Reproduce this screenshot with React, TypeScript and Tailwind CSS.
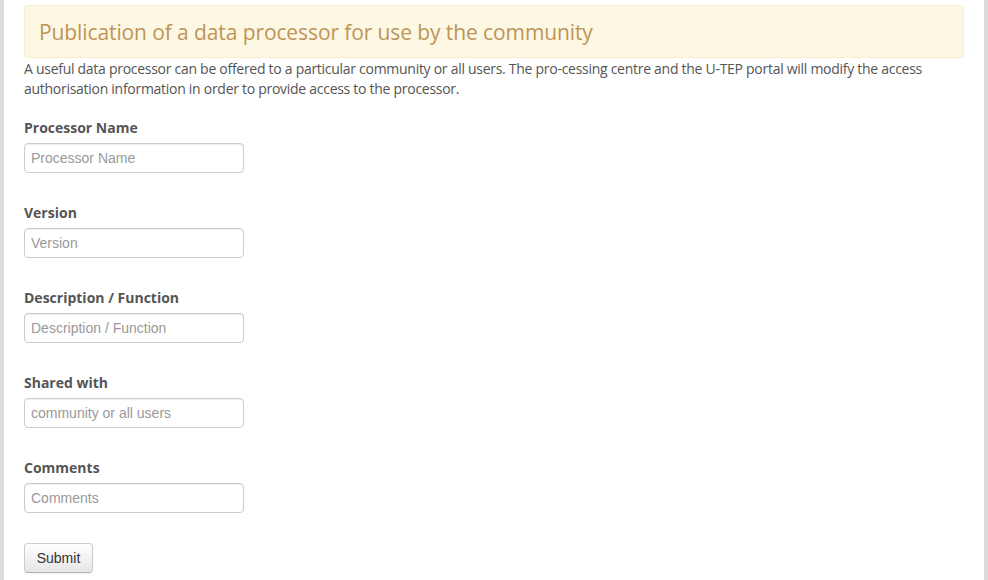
const fields = [
  { label: "Processor Name", placeholder: "Processor Name" },
  { label: "Version", placeholder: "Version" },
  { label: "Description / Function", placeholder: "Description / Function" },
  { label: "Shared with", placeholder: "community or all users" },
  { label: "Comments", placeholder: "Comments" },
];

export default function App() {
  return (
    <div className="flex h-[580px] w-[988px] bg-[#dcdcdc] px-[4px] overflow-hidden">
      <div className="flex-1 bg-white pl-[20px] pr-[20px] pt-[5px] font-['Open_Sans',sans-serif] text-[14px] text-[#555]">
        <div className="h-[53px] flex items-center rounded-[4px] border border-[#faebcc] bg-[#fcf8e3] px-[14px]">
          <h1 className="pt-[2px] text-[21px] tracking-[-0.1px] text-[#c09458]">Publication of a data processor for use by the community</h1>
        </div>
        <p className="mt-[1px] leading-[20px] tracking-[-0.28px]">
          A useful data processor can be offered to a particular community or all users. The pro-cessing centre and the U-TEP portal will modify the access authorisation information in order to provide access to the processor.
        </p>
        <form className="mt-[19px]" onSubmit={e => e.preventDefault()}>
          {fields.map(f => (
            <div key={f.label} className="h-[85px]">
              <label className="block font-bold leading-[20px]">{f.label}</label>
              <input
                placeholder={f.placeholder}
                className="mt-[5px] block h-[30px] w-[220px] rounded-[4px] border border-[#ccc] px-[6px] font-['Liberation_Sans',Arial,sans-serif] text-[14px] text-[#555] placeholder:text-[#999] shadow-[inset_0_1px_1px_rgba(0,0,0,0.075)]"
              />
            </div>
          ))}
          <button
            type="submit"
            className="mt-0 h-[30px] w-[69px] rounded-[4px] border border-[#ccc] border-b-[#b3b3b3] bg-gradient-to-b from-white to-[#e6e6e6] font-['Liberation_Sans',Arial,sans-serif] text-[14px] text-[#333] shadow-[0_1px_2px_rgba(0,0,0,0.05)]"
          >
            Submit
          </button>
        </form>
      </div>
    </div>
  );
}
